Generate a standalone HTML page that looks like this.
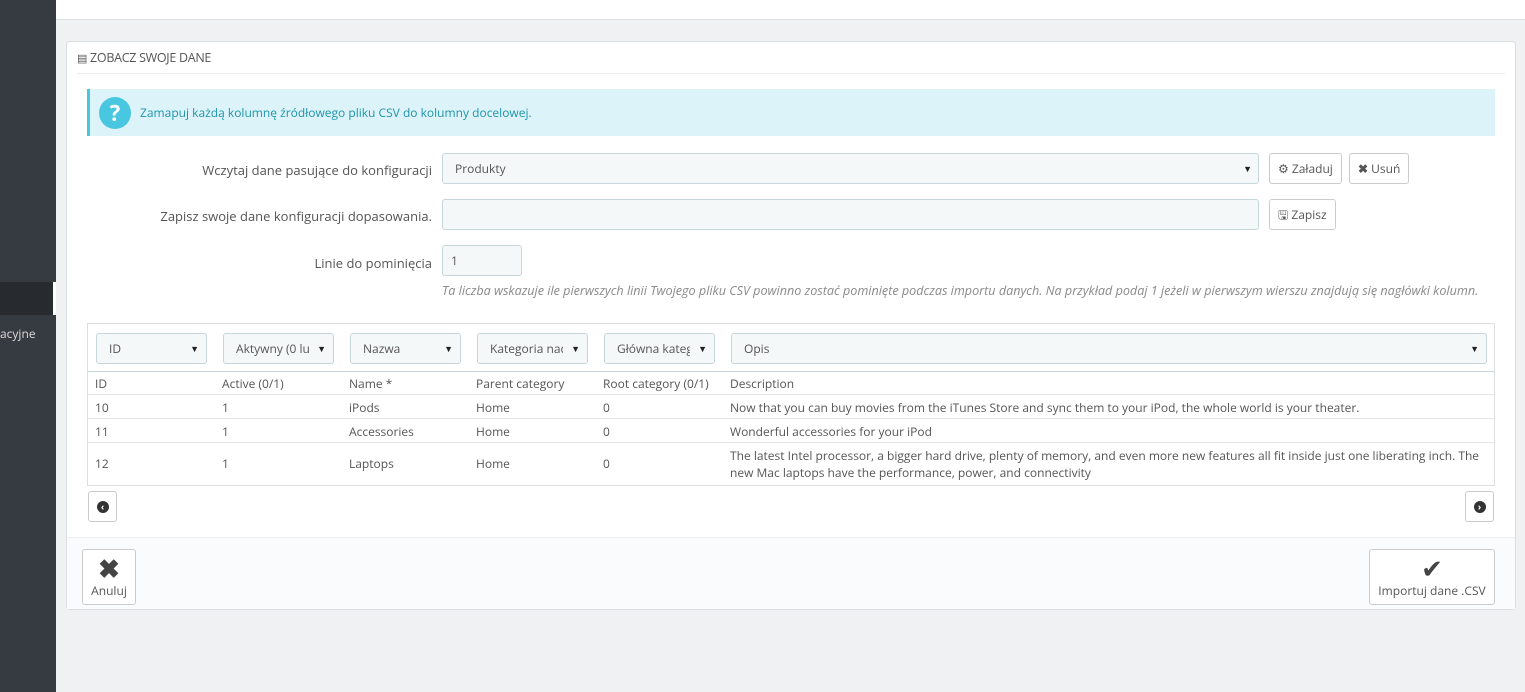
<!DOCTYPE html>
<html><head><meta charset="utf-8"><style>
*{box-sizing:border-box;margin:0;padding:0}
body{width:1525px;height:692px;background:#eff1f2;font-family:"Open Sans","Liberation Sans",sans-serif;font-size:12px;color:#555;position:relative;overflow:hidden}
.side{position:absolute;left:0;top:0;width:56px;height:692px;background:#363a41}
.side .act{position:absolute;left:0;top:282px;width:56px;height:33px;background:#272a2f;border-right:3px solid #fff}
.side .t{position:absolute;left:0;top:325px;color:#ddd;font-size:12px}
.top{position:absolute;left:56px;top:0;right:0;height:20px;background:#fff;border-bottom:1px solid #dcdfe2}
.panel{position:absolute;left:66px;top:41px;width:1450px;height:569px;background:#fff;border:1px solid #dcdfe2;border-radius:4px}
.ph{height:32px;border-bottom:1px solid #eee;margin:0 10px;line-height:31px;font-size:12.5px;color:#555;letter-spacing:-0.3px}
.alert{position:absolute;left:20px;top:47px;width:1408px;height:47px;background:#dcf4f9;border-left:3px solid #4ac7e0;color:#1e94ab;line-height:47px;padding-left:50px}
.qi{position:absolute;left:9px;top:8px;width:32px;height:32px;border-radius:50%;background:#4ac7e0;color:#fff;font-weight:bold;font-size:22px;line-height:32px;text-align:center}
.lbl{position:absolute;text-align:right;width:360px;left:5px;font-size:13px;color:#555}
.inp{position:absolute;background:#f5f8f9;border:1px solid #c7d6db;border-radius:3px;height:31px;line-height:29px;padding-left:12px;font-size:12px;color:#555}
.btn{position:absolute;background:#fff;border:1px solid #ccc;border-radius:3px;height:31px;line-height:29px;padding:0 8px;font-size:12px;color:#555}
.help{position:absolute;left:375px;top:240px;font-style:italic;font-size:12.6px;color:#8a8a8a;white-space:nowrap}
.tbl{position:absolute;left:20px;top:281px;width:1408px;height:163px;border:1px solid #dcdfe2}
.sel{position:absolute;top:9px;height:31px;background:#f5f8f9;border:1px solid #c7d6db;border-radius:3px;line-height:29px;padding-left:12px;color:#555}
.sel i{font-style:normal;display:block;overflow:hidden;white-space:nowrap;margin-right:24px}
.sel:after{content:"▼";position:absolute;right:7px;top:0;font-size:9px;color:#222}
.row{position:absolute;left:0;width:1406px;border-bottom:1px solid #e4e8ea}
.c{position:absolute;color:#555}
.nav{position:absolute;top:449px;width:29px;height:31px;border:1px solid #ccc;border-radius:3px;background:#fff;text-align:center;line-height:28px}
.nav span{display:inline-block;width:12px;height:12px;border-radius:50%;background:#333;color:#fff;font-size:9px;line-height:12px;font-weight:bold}
.foot{position:absolute;left:0;top:495px;width:1448px;height:72px;background:#fafbfc;border-top:1px solid #eee}
.big{position:absolute;top:11px;height:56px;background:#fff;border:1px solid #ccc;border-radius:3px;text-align:center;font-size:12px;color:#555}
</style></head><body>
<div class="side"><div class="act"></div><div class="t">acyjne</div></div>
<div class="top"></div>
<div class="panel">
<div class="ph"><span style="font-size:11px">&#9636;</span> ZOBACZ SWOJE DANE</div>
<div class="alert"><div class="qi">?</div>Zamapuj każdą kolumnę źródłowego pliku CSV do kolumny docelowej.</div>
<div class="lbl" style="top:119px">Wczytaj dane pasujące do konfiguracji</div>
<div class="inp" style="left:375px;top:111px;width:817px">Produkty<span style="position:absolute;right:6px;font-size:9px;color:#222">▼</span></div>
<div class="btn" style="left:1202px;top:111px">⚙ Załaduj</div>
<div class="btn" style="left:1282px;top:111px"><b>✖</b> Usuń</div>
<div class="lbl" style="top:165px">Zapisz swoje dane konfiguracji dopasowania.</div>
<div class="inp" style="left:375px;top:157px;width:817px"></div>
<div class="btn" style="left:1202px;top:157px">🖫 Zapisz</div>
<div class="lbl" style="top:212px">Linie do pominięcia</div>
<div class="inp" style="left:375px;top:203px;width:80px;padding-left:8px">1</div>
<div class="help">Ta liczba wskazuje ile pierwszych linii Twojego pliku CSV powinno zostać pominięte podczas importu danych. Na przykład podaj 1 jeżeli w pierwszym wierszu znajdują się nagłówki kolumn.</div>
<div class="tbl">
<div class="sel" style="left:8px;width:111px"><i>ID</i></div>
<div class="sel" style="left:135px;width:111px"><i>Aktywny (0 lub 1)</i></div>
<div class="sel" style="left:262px;width:111px"><i>Nazwa</i></div>
<div class="sel" style="left:389px;width:111px"><i>Kategoria nadrzędna</i></div>
<div class="sel" style="left:516px;width:111px"><i>Główna kategoria</i></div>
<div class="sel" style="left:643px;width:756px"><i>Opis</i></div>
<div class="row" style="top:47px;height:24px;border-top:1px solid #c7d6db"></div>
<div class="row" style="top:71px;height:24px"></div>
<div class="row" style="top:95px;height:24px"></div>
<div class="c" style="top:51px;left:7px">ID</div><div class="c" style="top:51px;left:134px">Active (0/1)</div><div class="c" style="top:51px;left:261px">Name *</div><div class="c" style="top:51px;left:388px">Parent category</div><div class="c" style="top:51px;left:515px">Root category (0/1)</div><div class="c" style="top:51px;left:642px">Description</div>
<div class="c" style="top:75px;left:7px">10</div><div class="c" style="top:75px;left:134px">1</div><div class="c" style="top:75px;left:261px">iPods</div><div class="c" style="top:75px;left:388px">Home</div><div class="c" style="top:75px;left:515px">0</div><div class="c" style="top:75px;left:642px">Now that you can buy movies from the iTunes Store and sync them to your iPod, the whole world is your theater.</div>
<div class="c" style="top:99px;left:7px">11</div><div class="c" style="top:99px;left:134px">1</div><div class="c" style="top:99px;left:261px">Accessories</div><div class="c" style="top:99px;left:388px">Home</div><div class="c" style="top:99px;left:515px">0</div><div class="c" style="top:99px;left:642px">Wonderful accessories for your iPod</div>
<div class="c" style="top:131px;left:7px">12</div><div class="c" style="top:131px;left:134px">1</div><div class="c" style="top:131px;left:261px">Laptops</div><div class="c" style="top:131px;left:388px">Home</div><div class="c" style="top:131px;left:515px">0</div><div class="c" style="top:123px;left:642px;width:760px;line-height:17px">The latest Intel processor, a bigger hard drive, plenty of memory, and even more new features all fit inside just one liberating inch. The new Mac laptops have the performance, power, and connectivity</div>
</div>
<div class="nav" style="left:21px"><span>‹</span></div>
<div class="nav" style="left:1398px"><span>›</span></div>
<div class="foot">
<div class="big" style="left:15px;width:54px"><div style="font-size:26px;font-weight:bold;line-height:28px;margin-top:4px;color:#444">✖</div>Anuluj</div>
<div class="big" style="left:1302px;width:126px"><div style="font-size:26px;line-height:28px;margin-top:4px;color:#444">✔</div>Importuj dane .CSV</div>
</div>
</div>
</body></html>
